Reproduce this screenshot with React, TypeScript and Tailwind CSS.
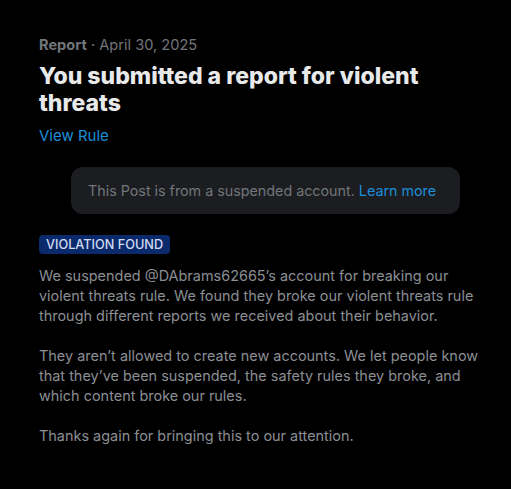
import React from 'react';

// Report notification detail: violation found, suspended account.
const paragraphs = [
  "We suspended @DAbrams62665\u2019s account for breaking our violent threats rule. We found they broke our violent threats rule through different reports we received about their behavior.",
  "They aren\u2019t allowed to create new accounts. We let people know that they\u2019ve been suspended, the safety rules they broke, and which content broke our rules.",
  "Thanks again for bringing this to our attention.",
];

export default function App() {
  return (
    <div className="min-h-[489px] w-[511px] bg-black font-['Inter',sans-serif] pl-[39px] pr-[30px] pt-[35px]">
      <div className="text-[14.6px] leading-5 text-[#71767b]">
        <span className="font-bold">Report</span> · April 30, 2025
      </div>
      <h1 className="mt-2 w-[400px] text-[23px] leading-[27px] font-extrabold text-[#e7e9ea]">
        You submitted a report for violent threats
      </h1>
      <div className="mt-[9px] text-[15px] leading-5 text-[#1d8fdb]">View Rule</div>

      <div className="mt-[21px] ml-[32px] w-[389px] h-[47px] rounded-xl bg-[#1c1d20] px-[17px] text-[14.3px] leading-[47px] text-[#71767b] whitespace-nowrap">
        This Post is from a suspended account. <span className="text-[#1d8fdb]">Learn more</span>
      </div>

      <div className="mt-[21px] inline-flex h-[19px] items-center rounded-sm bg-[#0b2a6b] px-[7px] text-[12.7px] font-medium text-[#d3dcf2]">
        VIOLATION FOUND
      </div>

      <div className="mt-[11px] flex flex-col gap-5 text-[14.45px] leading-5 text-[#8b8f94]">
        {paragraphs.map((p, i) => (
          <p key={i}>{p}</p>
        ))}
      </div>
    </div>
  );
}
